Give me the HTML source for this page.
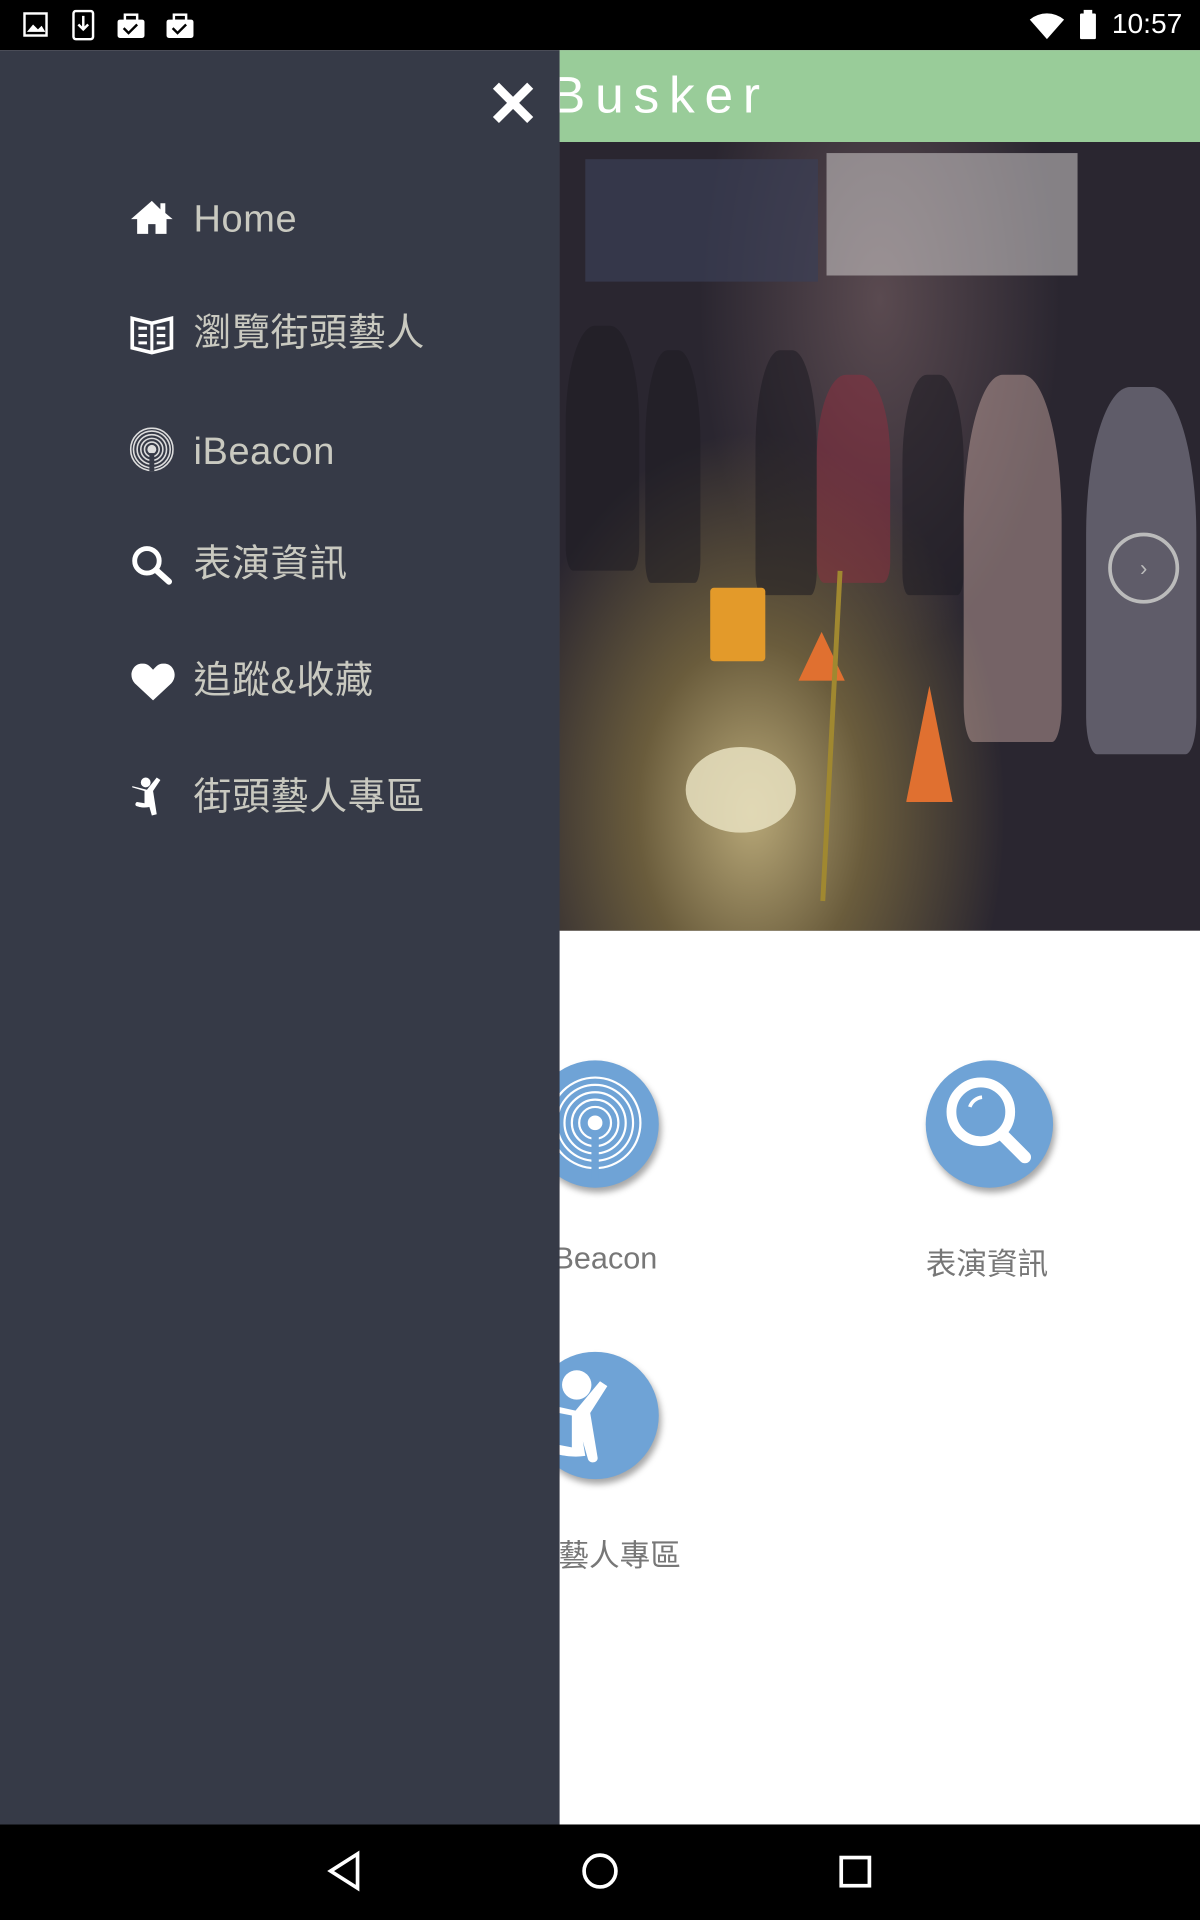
<!DOCTYPE html>
<html><head><meta charset="utf-8"><style>
html,body{margin:0;padding:0;width:1200px;height:1920px;overflow:hidden;background:#000}
#w{position:absolute;left:0;top:0;width:980px;height:1568px;transform:scale(1.22449);transform-origin:0 0;font-family:"Liberation Sans","Noto Sans CJK TC",sans-serif}
.a{position:absolute}
.menu{position:absolute;left:158px;color:#c9c9c0;font-size:31px;line-height:40px;letter-spacing:0.5px}
.ic{position:absolute;left:106px}
.circ{position:absolute;width:104px;height:104px;border-radius:50%;background:#6fa3d6;box-shadow:2px 4px 5px rgba(0,0,0,.35)}
.lab{position:absolute;color:#777;font-size:25px}
.p{position:absolute;border-radius:40% 40% 10% 10%;background:#1e1c22;opacity:.55}
</style></head><body><div id="w">
<div class="a" style="left:0;top:0;width:980px;height:41px;background:#000"></div>
<svg class="a" style="left:18px;top:8px" width="150" height="26" viewBox="0 0 150 26" fill="#fff">
<rect x="2" y="3" width="18" height="18" fill="none" stroke="#fff" stroke-width="2"/><path d="M4 18l5-6 4 4 3-3 3 5z"/>
<rect x="42" y="1" width="16" height="23" rx="2" fill="none" stroke="#fff" stroke-width="2"/><path d="M50 5v11M46 12l4 4 4-4" stroke="#fff" stroke-width="2" fill="none"/>
<rect x="78" y="8" width="22" height="15" rx="2"/><rect x="84" y="4" width="10" height="5" fill="none" stroke="#fff" stroke-width="2"/>
<rect x="118" y="8" width="22" height="15" rx="2"/><rect x="124" y="4" width="10" height="5" fill="none" stroke="#fff" stroke-width="2"/>
<path d="M83 15l4 4 7-7M123 15l4 4 7-7" stroke="#000" stroke-width="2" fill="none"/>
</svg>
<svg class="a" style="left:840px;top:8px" width="60" height="26" viewBox="0 0 60 26" fill="#fff"><path d="M1 8a22 22 0 0 1 28 0L15 24z"/><rect x="42" y="3" width="13" height="21" rx="1"/><rect x="45" y="0" width="7" height="4"/></svg>
<div class="a" style="left:908px;top:6px;color:#fff;font-size:23px">10:57</div>
<div class="a" style="left:0;top:41px;width:980px;height:1449px;background:#fff"></div>
<div class="a" style="left:457px;top:41px;width:523px;height:75px;background:#99cc99"></div>
<div class="a" style="left:450px;top:54px;color:#fff;font-size:42px;letter-spacing:8px;font-weight:300">Busker</div>
<div class="a" style="left:457px;top:116px;width:523px;height:644px;overflow:hidden;background:radial-gradient(ellipse at 30% 85%,#b8a878 0%,#6a5c3c 18%,transparent 40%),radial-gradient(ellipse at 50% 20%,#5a4a50 0%,#2a2630 40%),linear-gradient(#26242a,#3a332b 60%,#2c2820)">
<div class="a" style="left:21px;top:14px;width:190px;height:100px;background:#3b3f55;opacity:.7"></div>
<div class="a" style="left:218px;top:9px;width:205px;height:100px;background:#cfcccc;opacity:.55"></div>
<div class="p" style="left:5px;top:150px;width:60px;height:200px"></div>
<div class="p" style="left:70px;top:170px;width:45px;height:190px"></div>
<div class="p" style="left:160px;top:170px;width:50px;height:200px"></div>
<div class="p" style="left:210px;top:190px;width:60px;height:170px;background:#8a3040"></div>
<div class="p" style="left:280px;top:190px;width:50px;height:180px"></div>
<div class="p" style="left:330px;top:190px;width:80px;height:300px;background:#d0b0a8;opacity:.45"></div>
<div class="p" style="left:430px;top:200px;width:90px;height:300px;background:#b0b0c0;opacity:.4"></div>
<div class="a" style="left:123px;top:364px;width:45px;height:60px;background:#e39a2a;border-radius:3px"></div>
<div class="a" style="left:283px;top:444px;width:38px;height:95px;background:#e07030;clip-path:polygon(50% 0,100% 100%,0 100%)"></div>
<div class="a" style="left:195px;top:400px;width:38px;height:40px;background:#e07030;clip-path:polygon(50% 0,100% 100%,0 100%)"></div>
<div class="a" style="left:103px;top:494px;width:90px;height:70px;background:#e8e0c0;border-radius:50%;opacity:.85"></div>
<div class="a" style="left:220px;top:350px;width:4px;height:270px;background:#a08830;transform:rotate(3deg)"></div>
</div>
<div class="a" style="left:905px;top:435px;width:58px;height:58px;border:3px solid #bbb;border-radius:50%;box-sizing:border-box;color:#bbb;font-size:18px;text-align:center;line-height:52px">›</div>
<div class="circ" style="left:434px;top:866px"><svg width="104" height="104" viewBox="0 0 104 104" fill="none" stroke="#fff" stroke-width="1.8"><circle cx="52" cy="51" r="6" fill="#fff" stroke="none"/><circle cx="52" cy="51" r="13"/><circle cx="52" cy="51" r="19"/><circle cx="52" cy="51" r="25"/><circle cx="52" cy="51" r="31"/><circle cx="52" cy="51" r="37"/><rect x="49" y="57" width="6" height="40" fill="#6fa3d6" stroke="none"/></svg></div>
<div class="lab" style="left:452px;top:1014px">Beacon</div>
<div class="circ" style="left:756px;top:866px"><svg width="104" height="104" viewBox="0 0 104 104" fill="none" stroke="#fff"><circle cx="45" cy="42" r="24" stroke-width="8"/><path d="M64 62l17 17" stroke-width="10" stroke-linecap="round"/><path d="M36 38a12 12 0 0 1 10-8" stroke-width="3"/></svg></div>
<div class="lab" style="left:756px;top:1013px">表演資訊</div>
<div class="circ" style="left:434px;top:1104px"><svg width="104" height="104" viewBox="0 0 104 104" fill="#fff"><circle cx="37" cy="27" r="12"/><path d="M0 40l36 8 20-24 6 4-14 22 6 36c1 5-7 6-8 1l-4-14 2 12c-14 2-26 -2-30-4-3-3 0-7 3-6l16 3 0-26-31-6z"/></svg></div>
<div class="lab" style="left:456px;top:1251px">藝人專區</div>
<div class="a" style="left:0;top:41px;width:457px;height:1449px;background:#363a47"></div>
<svg class="a" style="left:400px;top:65px" width="38" height="38" viewBox="0 0 38 38"><path d="M5 5l28 28M33 5L5 33" stroke="#fff" stroke-width="7"/></svg>
<svg class="ic" style="top:162px" width="36" height="30" viewBox="0 0 36 30" fill="#fff"><path d="M18 2L1 17h5v12h9v-8h6v8h9V17h5l-6-5V4h-4v5z"/></svg>
<div class="menu" style="top:159px">Home</div>
<svg class="ic" style="top:256px" width="36" height="34" viewBox="0 0 36 34" fill="none" stroke="#fff" stroke-width="3"><path d="M2 4l16 4 16-4v24l-16 4-16-4z"/><path d="M18 8v24M7 12h7M7 18h7M7 24h7M22 12h7M22 18h7M22 24h7" stroke-width="2.5"/></svg>
<div class="menu" style="top:252px">瀏覽街頭藝人</div>
<svg class="ic" style="top:349px" width="36" height="36" viewBox="0 0 36 36" fill="none" stroke="#ddd" stroke-width="1.3"><circle cx="18" cy="18" r="3" fill="#ddd"/><circle cx="18" cy="18" r="6"/><circle cx="18" cy="18" r="9"/><circle cx="18" cy="18" r="12"/><circle cx="18" cy="18" r="15"/><circle cx="18" cy="18" r="17.3"/><rect x="16" y="21" width="4" height="15" fill="#363a47" stroke="none"/></svg>
<div class="menu" style="top:349px">iBeacon</div>
<svg class="ic" style="top:444px" width="36" height="34" viewBox="0 0 36 34" fill="none" stroke="#fff"><circle cx="14" cy="14" r="10" stroke-width="4"/><path d="M22 22l10 9" stroke-width="5" stroke-linecap="round"/></svg>
<div class="menu" style="top:441px">表演資訊</div>
<svg class="ic" style="top:540px" width="38" height="34" viewBox="0 0 38 34" fill="#fff"><path d="M19 32L4 18C-2 11 3 1 11 2c4 0 6 3 8 5 2-2 4-5 8-5 8-1 13 9 7 16z"/></svg>
<div class="menu" style="top:536px">追蹤&amp;收藏</div>
<svg class="ic" style="top:632px" width="36" height="36" viewBox="0 0 36 36" fill="#fff"><circle cx="13" cy="7" r="4"/><path d="M2 10l12 3 8-10 3 2-6 9 3 19-4 1-2-7c-5 1-9 0-11-1-1-1 0-3 1-3l6 1 0-10-10-3z"/></svg>
<div class="menu" style="top:631px">街頭藝人專區</div>
<div class="a" style="left:0;top:1490px;width:980px;height:78px;background:#000"></div>
<svg class="a" style="left:0;top:1490px" width="980" height="78" viewBox="0 0 980 78" fill="none" stroke="#fff" stroke-width="3"><path d="M292 24L270 38l22 14z"/><circle cx="490" cy="38" r="13"/><rect x="687" y="27" width="23" height="23"/></svg>
</div></body></html>
